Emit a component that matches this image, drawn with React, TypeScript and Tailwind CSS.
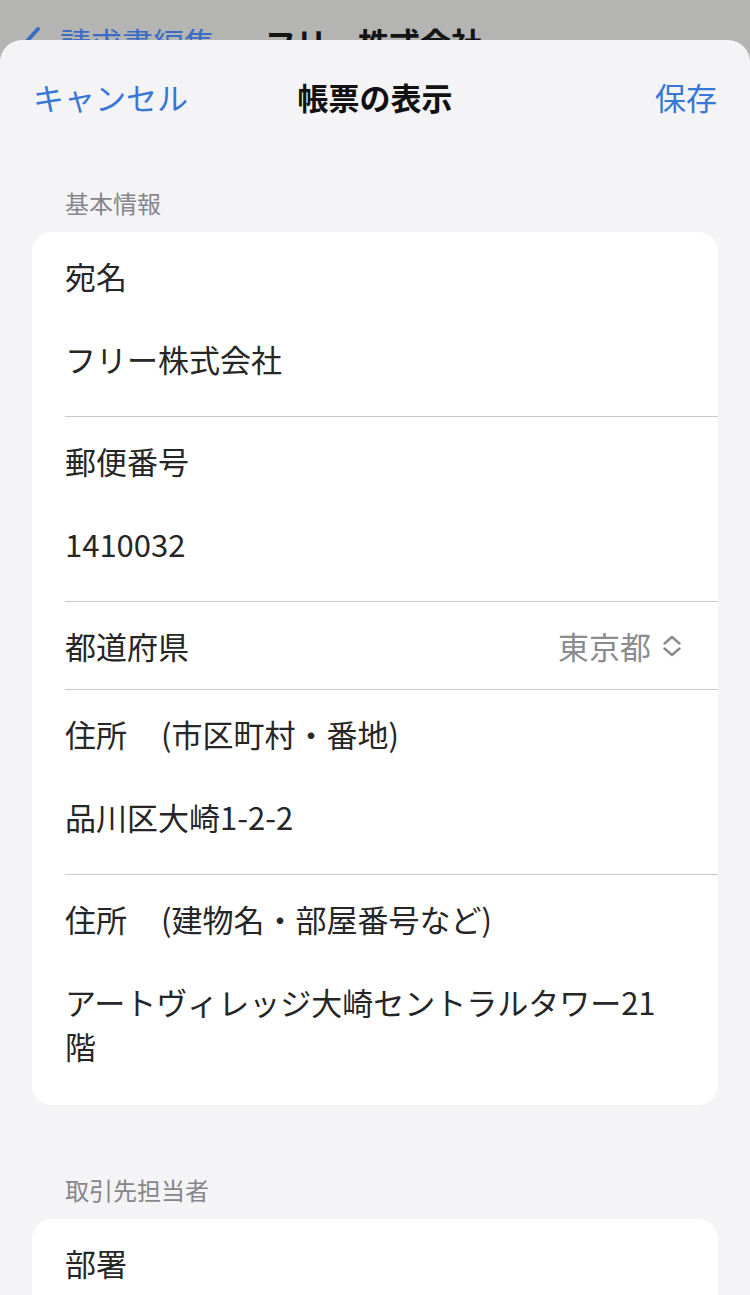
import React from "react";

const FONT = '"Noto Sans CJK JP", "Noto Sans", sans-serif';

function Field({
  label,
  value,
  last = false,
}: {
  label: React.ReactNode;
  value: React.ReactNode;
  last?: boolean;
}) {
  return (
    <div className="pl-[33px]">
      <div
        className={
          last
            ? "pr-[32px]"
            : "pr-[32px] border-b border-[#c9c8cd]"
        }
      >
        <div className="h-[88px] flex items-center text-[31px] leading-[44px] text-[#262626]">
          {label}
        </div>
        <div
          className={
            last
              ? "pt-[17px] pb-[37px] text-[31px] leading-[44px] text-[#262626]"
              : "pt-[17px] pb-[35px] text-[31px] leading-[44px] text-[#262626]"
          }
        >
          {value}
        </div>
      </div>
    </div>
  );
}

function UpDown() {
  return (
    <svg width="22" height="24" viewBox="0 0 22 24" fill="none">
      <path
        d="M3.5 9.5 L11 3 L18.5 9.5"
        stroke="#8b8b90"
        strokeWidth="2.4"
        strokeLinecap="round"
        strokeLinejoin="round"
      />
      <path
        d="M3.5 14.5 L11 21 L18.5 14.5"
        stroke="#8b8b90"
        strokeWidth="2.4"
        strokeLinecap="round"
        strokeLinejoin="round"
      />
    </svg>
  );
}

export default function App() {
  return (
    <div
      className="relative w-[750px] h-[1295px] overflow-hidden bg-[#b4b4b2]"
      style={{ fontFamily: FONT }}
    >
      {/* background page nav (mostly hidden by the sheet) */}
      <div className="flex items-center pl-[22px] pt-[24px] h-[60px]">
        <svg width="20" height="34" viewBox="0 0 20 34" fill="none">
          <path
            d="M16 4 L4 17 L16 30"
            stroke="#3a6cc4"
            strokeWidth="4"
            strokeLinecap="round"
            strokeLinejoin="round"
          />
        </svg>
        <span className="ml-[18px] text-[31px] leading-[36px] text-[#3a6cc4]">
          請求書編集
        </span>
        <span className="ml-[50px] text-[31px] leading-[36px] font-bold text-[#141414]">
          フリー株式会社
        </span>
      </div>

      {/* modal sheet */}
      <div className="absolute inset-x-0 top-[40px] bottom-0 bg-[#f4f3f5] rounded-t-[22px]">
        <div className="h-[114px] grid grid-cols-[1fr_auto_1fr] items-center px-[33px]">
          <span className="justify-self-start text-[31px] leading-[44px] text-[#3777d6]">
            キャンセル
          </span>
          <span className="text-[31px] leading-[44px] font-bold text-[#111111]">
            帳票の表示
          </span>
          <span className="justify-self-end text-[31px] leading-[44px] text-[#3777d6]">
            保存
          </span>
        </div>

        <div className="mt-[33px] h-[32px] pl-[65px] text-[24px] leading-[32px] text-[#86868a]">
          基本情報
        </div>
        <div className="mt-[13px] mx-[32px] bg-white rounded-[20px]">
          <Field label="宛名" value="フリー株式会社" />
          <Field label="郵便番号" value="1410032" />
          <div className="pl-[33px]">
            <div className="h-[88px] pr-[35px] border-b border-[#c9c8cd] flex items-center justify-between">
              <span className="text-[31px] leading-[44px] text-[#262626]">
                都道府県
              </span>
              <span className="flex items-center gap-[10px]">
                <span className="text-[31px] leading-[44px] text-[#8b8b90]">
                  東京都
                </span>
                <UpDown />
              </span>
            </div>
          </div>
          <Field
            label={
              <span>
                住所<span className="ml-[34px]">(市区町村・番地)</span>
              </span>
            }
            value="品川区大崎1-2-2"
          />
          <Field
            last
            label={
              <span>
                住所<span className="ml-[34px]">(建物名・部屋番号など)</span>
              </span>
            }
            value={
              <>
                アートヴィレッジ大崎セントラルタワー21
                <br />階
              </>
            }
          />
        </div>

        <div className="mt-[69px] h-[32px] pl-[65px] text-[24px] leading-[32px] text-[#86868a]">
          取引先担当者
        </div>
        <div className="mt-[13px] mx-[32px] bg-white rounded-[20px]">
          <div className="pl-[33px] h-[88px] flex items-center text-[31px] leading-[44px] text-[#262626]">
            部署
          </div>
          <div className="h-[98px]" />
        </div>
      </div>
    </div>
  );
}
